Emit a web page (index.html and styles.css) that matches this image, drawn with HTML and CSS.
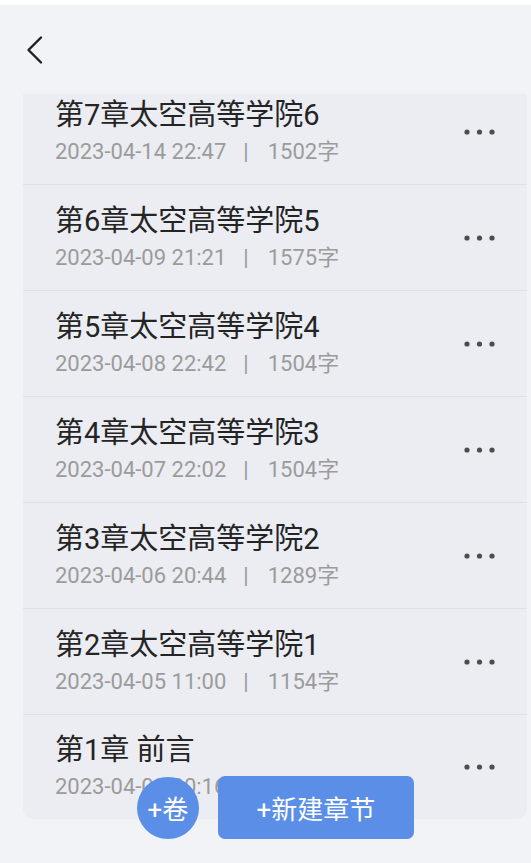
FILE: index.html
```html
<!DOCTYPE html>
<html lang="zh-CN">
<head>
    <meta charset="UTF-8">
    <meta name="viewport" content="width=device-width, initial-scale=1.0">
    <title>章节列表</title>
    <link rel="stylesheet" href="styles.css">
</head>
<body>
    <div class="page">
        <div class="status-strip"></div>
        <header class="topbar">
            <button class="back-btn" aria-label="返回">
                <svg width="20" height="30" viewBox="0 0 20 30">
                    <path d="M15 2.5 L2.5 15 L15 27.5" fill="none" stroke="#1f1f1f" stroke-width="2.4" stroke-linecap="round" stroke-linejoin="round"/>
                </svg>
            </button>
        </header>

        <main class="scroll">
            <div class="chapter-list">
                <div class="chapter">
                    <div class="chapter-info">
                        <div class="chapter-title">第7章太空高等学院6</div>
                        <div class="chapter-meta">2023-04-14 22:47<span class="sep">|</span>1502字</div>
                    </div>
                    <svg class="more" width="32" height="6" viewBox="0 0 32 6"><circle cx="3" cy="3" r="2.6"/><circle cx="15.5" cy="3" r="2.6"/><circle cx="28" cy="3" r="2.6"/></svg>
                </div>
                <div class="chapter">
                    <div class="chapter-info">
                        <div class="chapter-title">第6章太空高等学院5</div>
                        <div class="chapter-meta">2023-04-09 21:21<span class="sep">|</span>1575字</div>
                    </div>
                    <svg class="more" width="32" height="6" viewBox="0 0 32 6"><circle cx="3" cy="3" r="2.6"/><circle cx="15.5" cy="3" r="2.6"/><circle cx="28" cy="3" r="2.6"/></svg>
                </div>
                <div class="chapter">
                    <div class="chapter-info">
                        <div class="chapter-title">第5章太空高等学院4</div>
                        <div class="chapter-meta">2023-04-08 22:42<span class="sep">|</span>1504字</div>
                    </div>
                    <svg class="more" width="32" height="6" viewBox="0 0 32 6"><circle cx="3" cy="3" r="2.6"/><circle cx="15.5" cy="3" r="2.6"/><circle cx="28" cy="3" r="2.6"/></svg>
                </div>
                <div class="chapter">
                    <div class="chapter-info">
                        <div class="chapter-title">第4章太空高等学院3</div>
                        <div class="chapter-meta">2023-04-07 22:02<span class="sep">|</span>1504字</div>
                    </div>
                    <svg class="more" width="32" height="6" viewBox="0 0 32 6"><circle cx="3" cy="3" r="2.6"/><circle cx="15.5" cy="3" r="2.6"/><circle cx="28" cy="3" r="2.6"/></svg>
                </div>
                <div class="chapter">
                    <div class="chapter-info">
                        <div class="chapter-title">第3章太空高等学院2</div>
                        <div class="chapter-meta">2023-04-06 20:44<span class="sep">|</span>1289字</div>
                    </div>
                    <svg class="more" width="32" height="6" viewBox="0 0 32 6"><circle cx="3" cy="3" r="2.6"/><circle cx="15.5" cy="3" r="2.6"/><circle cx="28" cy="3" r="2.6"/></svg>
                </div>
                <div class="chapter">
                    <div class="chapter-info">
                        <div class="chapter-title">第2章太空高等学院1</div>
                        <div class="chapter-meta">2023-04-05 11:00<span class="sep">|</span>1154字</div>
                    </div>
                    <svg class="more" width="32" height="6" viewBox="0 0 32 6"><circle cx="3" cy="3" r="2.6"/><circle cx="15.5" cy="3" r="2.6"/><circle cx="28" cy="3" r="2.6"/></svg>
                </div>
                <div class="chapter last">
                    <div class="chapter-info">
                        <div class="chapter-title">第1章 前言</div>
                        <div class="chapter-meta">2023-04-03 20:16</div>
                    </div>
                    <svg class="more" width="32" height="6" viewBox="0 0 32 6"><circle cx="3" cy="3" r="2.6"/><circle cx="15.5" cy="3" r="2.6"/><circle cx="28" cy="3" r="2.6"/></svg>
                </div>
            </div>
        </main>

        <div class="actions">
            <button class="btn-volume">+卷</button>
            <button class="btn-chapter">+新建章节</button>
        </div>
    </div>
</body>
</html>
```

FILE: styles.css
```css
* {
    box-sizing: border-box;
}
body {
    margin: 0;
    background-color: #f2f3f7;
    font-family: Roboto, "Noto Sans CJK SC", sans-serif;
    color: #2b2b2b;
}
.page {
    position: relative;
    width: 531px;
    height: 863px;
    overflow: hidden;
    display: flex;
    flex-direction: column;
}
.status-strip {
    height: 5px;
    background-color: #ffffff;
}
.topbar {
    height: 89px;
    display: flex;
    align-items: flex-start;
    padding: 27px 0 0 24px;
}
.back-btn {
    border: none;
    background: none;
    padding: 0;
    width: 24px;
    height: 36px;
    display: flex;
    align-items: center;
    justify-content: center;
}
.scroll {
    flex: 1;
    overflow: hidden;
}
.chapter-list {
    margin: -15px 4px 0 23px;
    background-color: #ebedf2;
    border-radius: 10px;
}
.chapter {
    height: 106px;
    display: flex;
    align-items: center;
    padding: 0 31px 0 32px;
    border-bottom: 1px solid #dfe1e6;
}
.chapter.last {
    height: 104px;
    border-bottom: none;
}
.chapter-info {
    flex: 1;
}
.chapter-title {
    font-size: 29px;
    line-height: 36px;
    color: #242424;
}
.chapter-meta {
    margin-top: 4px;
    font-size: 22px;
    line-height: 30px;
    color: #9b9b9b;
}
.sep {
    margin: 0 19px 0 17px;
}
.more {
    fill: #4d4d50;
}
.actions {
    position: absolute;
    left: 137px;
    top: 776px;
    display: flex;
    align-items: center;
    gap: 19px;
}
.actions button {
    border: none;
    background-color: #5b8ee6;
    color: #ffffff;
    font-family: Roboto, "Noto Sans CJK SC", sans-serif;
    font-size: 26px;
    padding: 0;
}
.btn-volume {
    width: 62px;
    height: 62px;
    border-radius: 50%;
}
.btn-chapter {
    width: 196px;
    height: 63px;
    border-radius: 7px;
}
```
